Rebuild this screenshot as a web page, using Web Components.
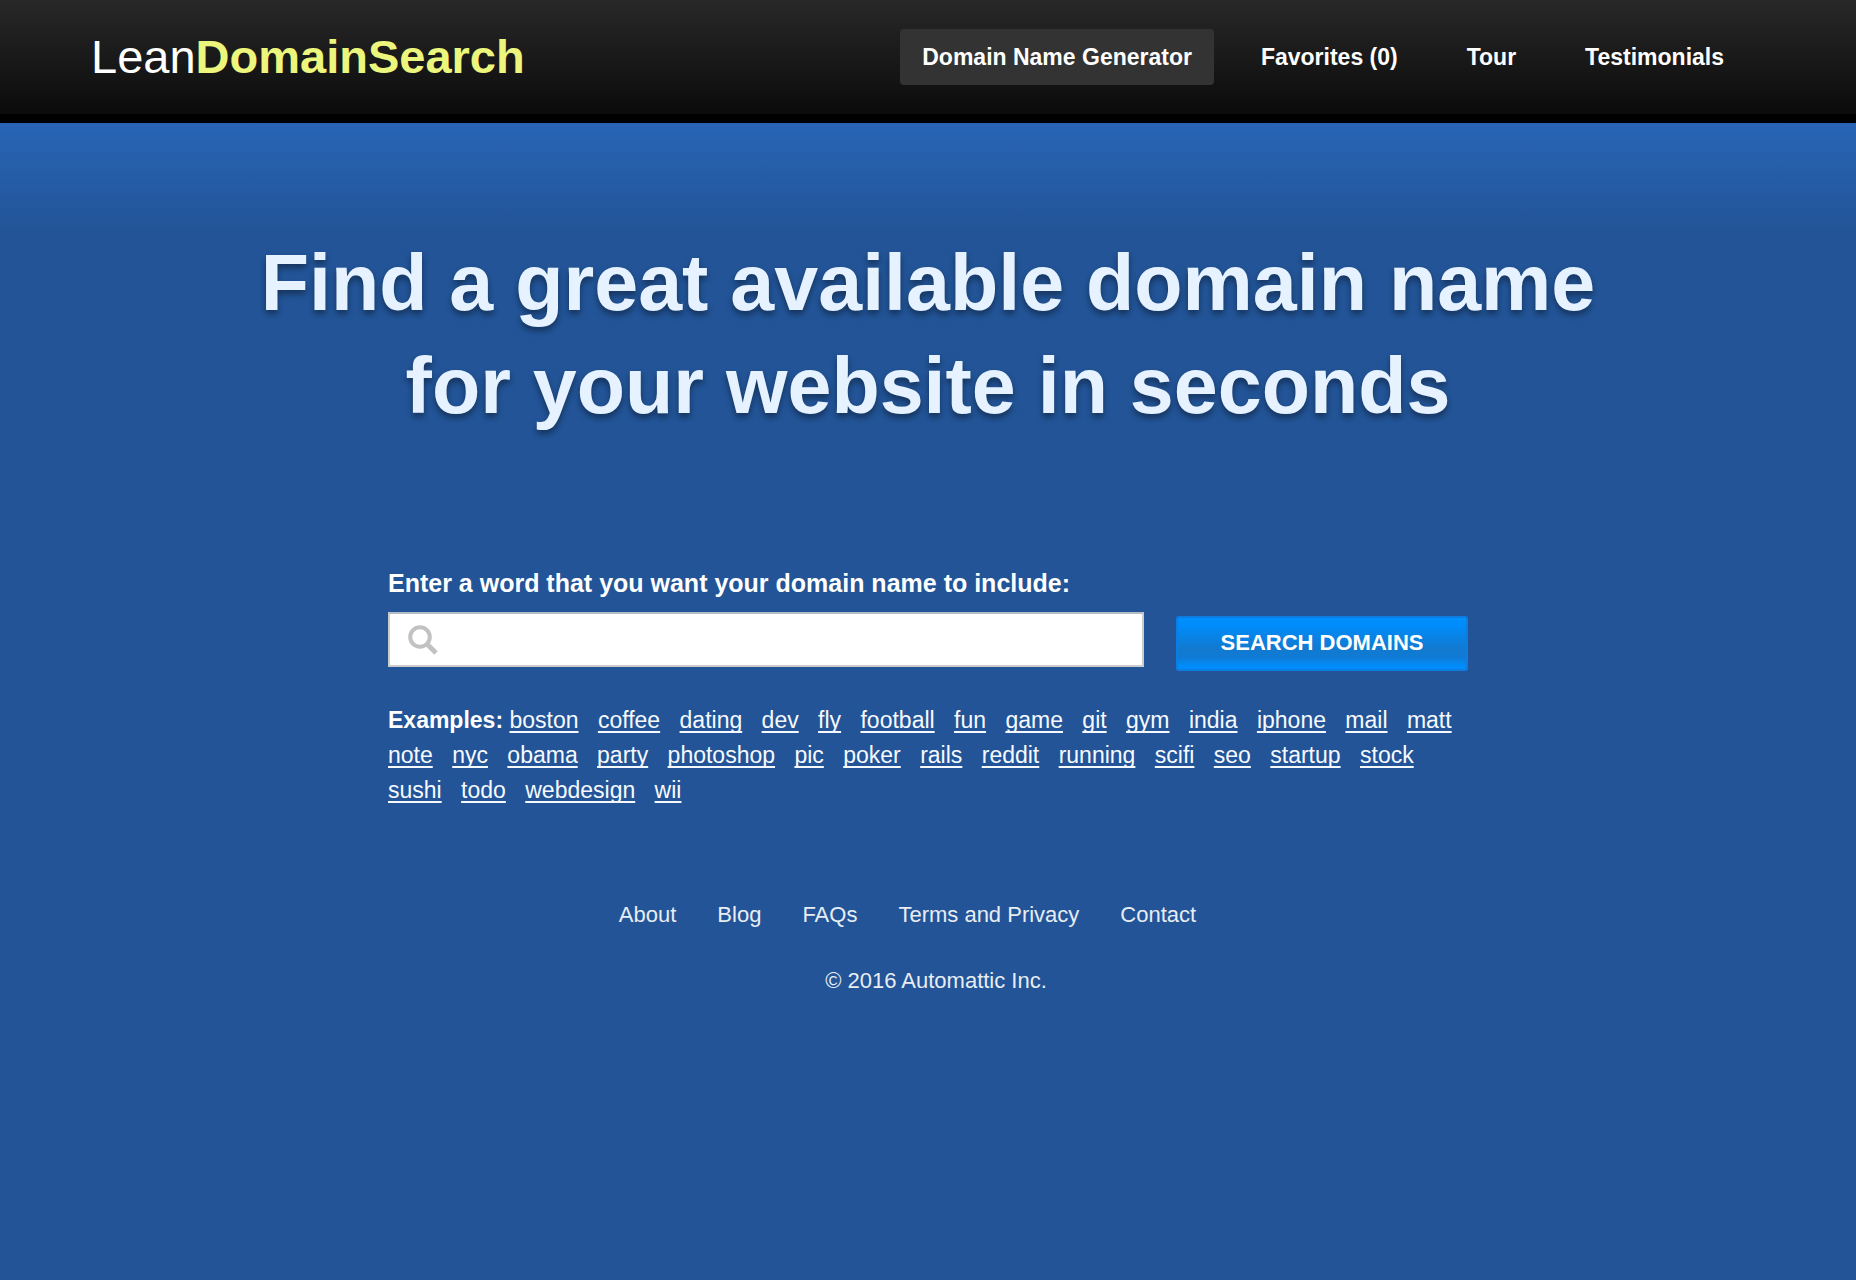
<!DOCTYPE html>
<html lang="en">
<head>
<meta charset="utf-8">
<meta name="viewport" content="width=device-width, initial-scale=1">
<title>Lean Domain Search</title>
<style>
  html { min-height: 100%; background: #225497; }
  body { margin: 0; color: #fff; font-family: "Liberation Sans", Arial, sans-serif; font-size: 23px; }
</style>
</head>
<body>
<domain-app></domain-app>
<script>
const define = (name, html, setup) => {
  const template = document.createElement('template');
  template.innerHTML = html;
  customElements.define(name, class extends HTMLElement {
    constructor() {
      super();
      this.attachShadow({ mode: 'open' }).append(template.content.cloneNode(true));
    }
    connectedCallback() { if (setup) setup(this, this.shadowRoot); }
  });
};

define('site-logo', `
  <style>
    :host { display: block; }
    a { color: #fff; text-decoration: none; font-size: 47px; line-height: 56px; }
    b { color: #ecf57c; }
  </style>
  <a href="#"><span>Lean</span><b>DomainSearch</b></a>`);

define('nav-link', `
  <style>
    :host { display: block; }
    a { display: block; padding: 0 22px; border-radius: 4px; color: #fff; font-weight: bold;
        line-height: 56px; text-decoration: none; white-space: nowrap; }
    :host([active]) a { background: #333; }
  </style>
  <a href="#"><slot></slot></a>`,
  (host, root) => { if (host.hasAttribute('active')) root.querySelector('a').setAttribute('aria-current', 'page'); });

define('site-header', `
  <style>
    :host { display: block; background: linear-gradient(#282828, #0b0b0b); border-bottom: 9px solid #000; }
    header { display: flex; flex-wrap: wrap; justify-content: space-between; align-items: flex-start;
             padding: 29px 110px 29px 91px; }
    nav { display: flex; flex-wrap: wrap; gap: 25px; }
  </style>
  <header>
    <site-logo></site-logo>
    <nav>
      <nav-link active>Domain Name Generator</nav-link>
      <nav-link>Favorites (0)</nav-link>
      <nav-link>Tour</nav-link>
      <nav-link>Testimonials</nav-link>
    </nav>
  </header>`);

define('page-headline', `
  <style>
    :host { display: block; }
    h1 { max-width: 1400px; margin: 0 auto; color: #e6f2ff; font-size: 79px; line-height: 103px;
         text-align: center; text-shadow: 0 4px 6px rgba(0, 0, 0, .4); }
  </style>
  <h1><slot></slot></h1>`);

define('domain-search', `
  <style>
    :host { display: block; }
    label { display: block; margin-bottom: 11px; font-size: 25px; line-height: 36px; font-weight: bold; }
    .row { display: flex; align-items: flex-start; gap: 32px; }
    .field { flex: 1; display: flex; align-items: center; box-sizing: border-box; height: 55px;
             padding-left: 18px; gap: 12px; background: #fff; border: 2px solid #ccc;
             border-top-color: #b4bcc6; }
    svg { display: block; flex: none; width: 30px; height: 30px; }
    input { flex: 1; min-width: 0; height: 100%; padding: 0; border: 0; outline: 0; background: none;
            font: inherit; color: #333; }
    button { flex: 0 0 292px; height: 55px; margin: 4px 0 0; padding: 0 0 2px; border: 2px solid #0c7ee2; border-radius: 3px;
             background: linear-gradient(#0090ff 0%, #008cfa 15%, #1279cf 62%, #0f7bd6 78%, #008dfb 94%);
             color: #fff; font: bold 22px "Liberation Sans", Arial, sans-serif; cursor: pointer; }
  </style>
  <form onsubmit="return false">
    <label for="word">Enter a word that you want your domain name to include:</label>
    <div class="row">
      <div class="field">
        <svg viewBox="0 0 30 30" fill="none" stroke="#c2c2c2" aria-hidden="true">
          <circle cx="12" cy="12" r="9.800" stroke-width="4"/>
          <path d="M18.500 18.500l9.500 9.500" stroke-width="5"/>
        </svg>
        <input id="word" type="text" autocomplete="off">
      </div>
      <button type="submit">SEARCH DOMAINS</button>
    </div>
  </form>`);

define('example-words', `
  <style>
    :host { display: block; line-height: 35px; }
    p { margin: 0; }
    a { margin-right: 13px; color: #f6faff; text-decoration: underline 2px; text-underline-offset: 3px;
        text-decoration-skip-ink: none; }
  </style>
  <p><b>Examples:</b> <span></span></p>`,
  (host, root) => {
    const list = root.querySelector('span');
    list.replaceChildren();
    for (const word of host.getAttribute('words').split(' ')) {
      const link = document.createElement('a');
      link.href = '#';
      link.textContent = word;
      list.append(link, ' ');
    }
  });

define('site-footer', `
  <style>
    :host { display: block; color: #e8edf3; font-size: 22px; line-height: 30px; }
    ul { display: flex; flex-wrap: wrap; justify-content: center; margin: 0 0 36px; padding: 0; list-style: none; }
    li { margin-right: 41px; }
    a { color: inherit; text-decoration: none; }
    p { margin: 0; padding-left: 16px; text-align: center; }
  </style>
  <footer>
    <ul>
      <li><a href="#">About</a></li>
      <li><a href="#">Blog</a></li>
      <li><a href="#">FAQs</a></li>
      <li><a href="#">Terms and Privacy</a></li>
      <li><a href="#">Contact</a></li>
    </ul>
    <p>© 2016 Automattic Inc.</p>
  </footer>`);

define('domain-app', `
  <style>
    :host { display: block; }
    .body { padding: 108px 24px 60px; background: linear-gradient(#2865b6, #225497 110px); }
    .column { max-width: 1080px; margin: 128px auto 92px; }
    example-words { margin-top: 32px; }
  </style>
  <site-header></site-header>
  <div class="body">
    <main>
      <page-headline>Find a great available domain name for your website in seconds</page-headline>
      <div class="column">
        <domain-search></domain-search>
        <example-words words="boston coffee dating dev fly football fun game git gym india iphone mail matt note nyc obama party photoshop pic poker rails reddit running scifi seo startup stock sushi todo webdesign wii"></example-words>
      </div>
    </main>
    <site-footer></site-footer>
  </div>`);
</script>
</body>
</html>
